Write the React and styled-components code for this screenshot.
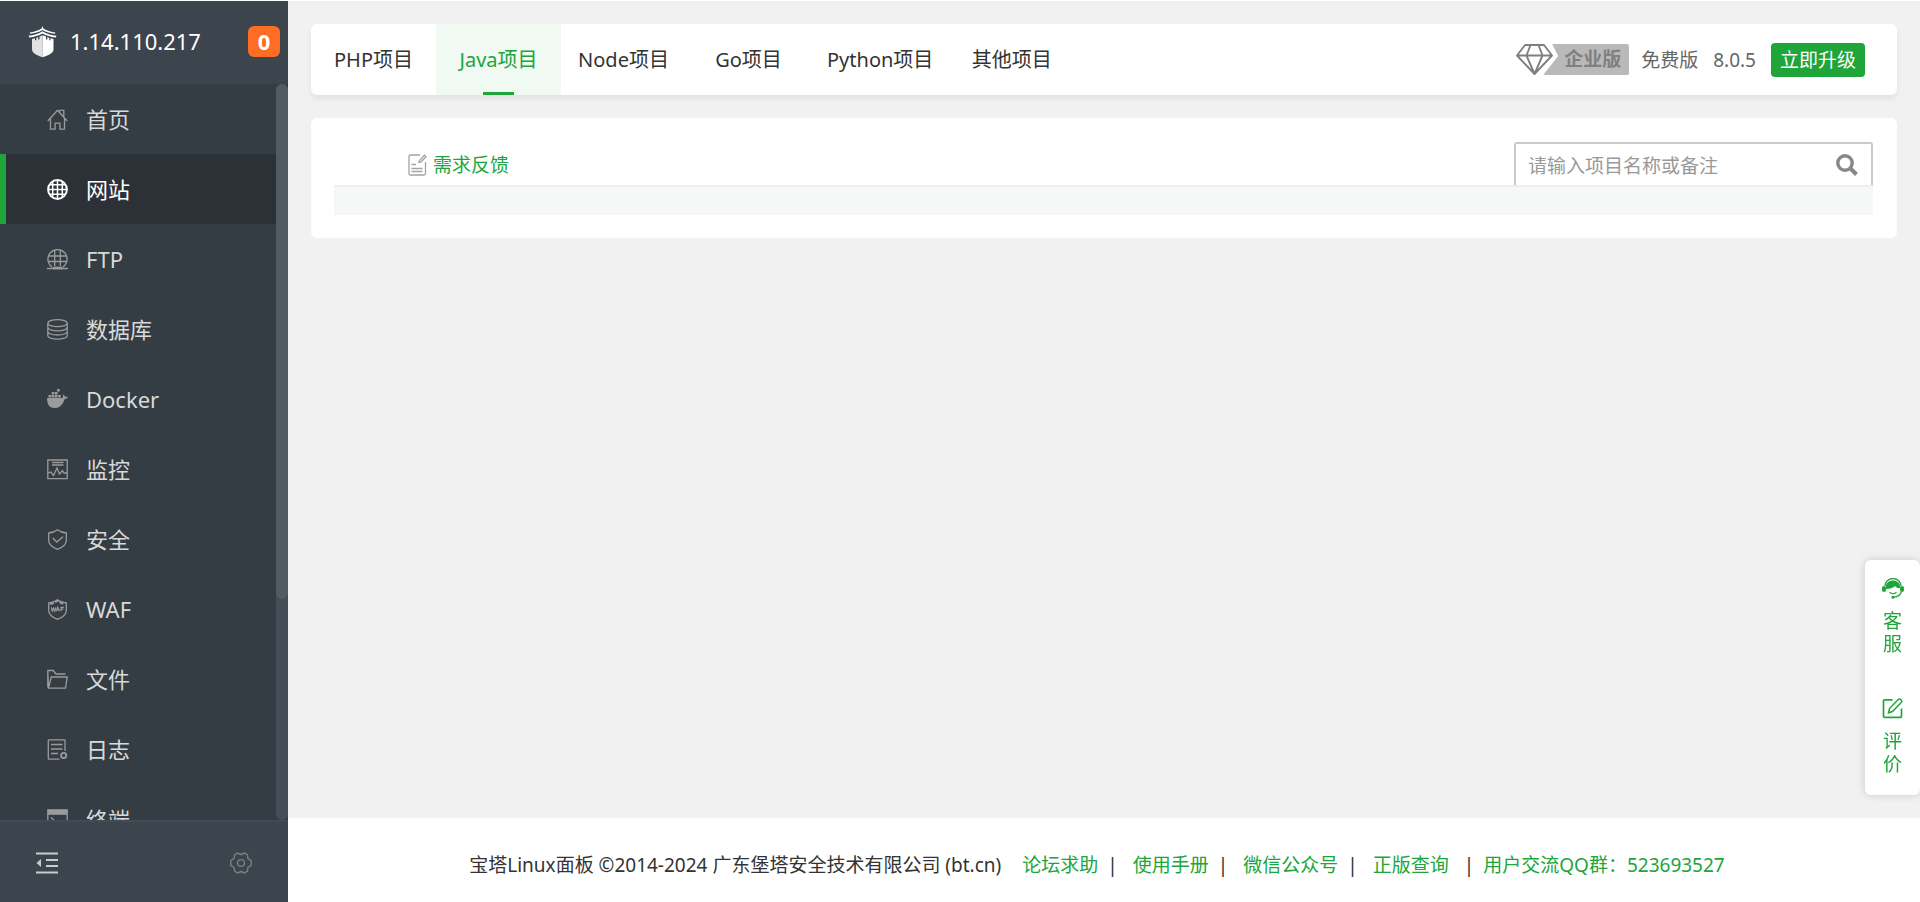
import React from 'react';
import styled, { createGlobalStyle, css } from 'styled-components';

const green = '#20a53a';

const GlobalStyle = createGlobalStyle`
  * {
    box-sizing: border-box;
  }

  body {
    margin: 0;
    background: #f1f1f1;
    color: #333;
    font-family: 'Noto Sans', 'Noto Sans CJK SC', sans-serif;
    font-size: 19px;
    line-height: 28px;
  }

  a {
    text-decoration: none;
  }

  button, input {
    font: inherit;
  }

  svg {
    display: block;
    flex: none;
  }
`;

const Layout = styled.div`
  display: flex;
  height: 100vh;
  border-top: 1px solid #fff;
`;

/* sidebar */

const Sidebar = styled.aside`
  display: flex;
  flex-direction: column;
  flex: none;
  width: 288px;
  background: #353d44;
`;

const SidebarHead = styled.div`
  display: flex;
  align-items: center;
  height: 83px;
  padding: 0 8px 2px 28px;
  background: #3c444d;
  color: #fff;
  font-size: 22px;
`;

const Address = styled.span`
  flex: 1;
  margin-left: 12px;
  padding-bottom: 2px;
`;

const Badge = styled.span`
  width: 32px;
  height: 31px;
  border-radius: 6px;
  background: #ff6c23;
  font-weight: 700;
  line-height: 31px;
  text-align: center;
`;

const MenuWrap = styled.div`
  display: flex;
  flex: 1;
  min-height: 0;
`;

const Menu = styled.ul`
  flex: 1;
  margin: 0;
  padding: 0;
  overflow: hidden;
  list-style: none;
`;

const MenuLink = styled.a`
  display: flex;
  align-items: center;
  gap: 18px;
  height: 70px;
  padding-left: 41px;
  border-left: 6px solid transparent;
  color: #d9d9d9;
  font-size: 22px;

  svg {
    color: #9b9b9b;
  }

  ${({ $active }) => $active && css`
    border-left-color: ${green};
    background: #2c3138;
    color: #fff;

    svg {
      color: #fff;
    }
  `}
`;

const ScrollTrack = styled.div`
  width: 12px;
  border-radius: 6px;
  background: #454d57;
`;

const ScrollThumb = styled.div`
  height: 70%;
  border-radius: 6px;
  background: #525a62;
`;

const SidebarFoot = styled.div`
  display: flex;
  align-items: center;
  justify-content: space-between;
  height: 82px;
  padding: 2px 36px 0;
  border-top: 2px solid #414b56;
  background: #3c444d;
`;

const IconButton = styled.button`
  padding: 0;
  border: 0;
  background: none;
  color: ${({ $color }) => $color};
  cursor: pointer;
`;

/* content */

const Main = styled.main`
  display: flex;
  flex: 1;
  flex-direction: column;
  min-width: 0;
`;

const Content = styled.div`
  display: flex;
  flex: 1;
  flex-direction: column;
  gap: 23px;
  padding: 23px;
`;

const TopBar = styled.header`
  display: flex;
  align-items: center;
  justify-content: space-between;
  height: 71px;
  padding-right: 32px;
  border-radius: 6px;
  background: #fff;
  box-shadow: 0 4px 5px rgba(0, 0, 0, 0.06);
`;

const Tabs = styled.nav`
  display: flex;
  height: 100%;
`;

const Tab = styled.a`
  display: flex;
  align-items: center;
  justify-content: center;
  min-width: 125px;
  padding: 0 16px;
  color: #333;
  font-size: 20px;
  white-space: nowrap;

  ${({ $active }) => $active && css`
    position: relative;
    background: #f0f9f2;
    color: ${green};

    &::after {
      content: '';
      position: absolute;
      bottom: 0;
      left: calc(50% - 16px);
      width: 31px;
      height: 3px;
      background: ${green};
    }
  `}
`;

const Version = styled.div`
  display: flex;
  align-items: center;
  color: #666;
  white-space: nowrap;
`;

const Edition = styled.a`
  display: flex;
  align-items: center;
  margin-right: 12px;
  color: #808080;
  font-weight: 700;
`;

const EditionLabel = styled.span`
  height: 31px;
  margin-left: -10px;
  padding: 0 8px 0 21px;
  border-radius: 2px;
  background: #b9b9b9;
  clip-path: polygon(9px 0, 100% 0, 100% 100%, 0 100%, 15px 12px);
  line-height: 31px;
`;

const VersionNumber = styled.span`
  margin: 0 15px;
`;

const UpgradeButton = styled.button`
  height: 34px;
  padding: 0 9px;
  border: 0;
  border-radius: 4px;
  background: ${green};
  color: #fff;
  line-height: 34px;
  cursor: pointer;
`;

const Panel = styled.section`
  padding: 24px 24px 23px 23px;
  border-radius: 6px;
  background: #fff;
`;

const Toolbar = styled.div`
  display: flex;
  justify-content: space-between;
  height: 43px;
`;

const FeedbackLink = styled.a`
  display: flex;
  align-items: center;
  gap: 6px;
  margin-left: 74px;
  padding-top: 3px;
  color: ${green};
`;

const SearchBox = styled.label`
  display: flex;
  align-items: center;
  width: 359px;
  padding: 0 13px 0 12px;
  border: 2px solid #c9c9c9;
  border-bottom: 0;
  border-radius: 3px 3px 0 0;
  color: #888;
`;

const SearchInput = styled.input`
  flex: 1;
  min-width: 0;
  padding: 2px 0 0;
  border: 0;
  outline: 0;
  background: none;

  &::placeholder {
    color: #999;
    opacity: 1;
  }
`;

const TableHead = styled.div`
  height: 30px;
  border-top: 2px solid #ecf0f0;
  background: #f5f8f7;
`;

const Footer = styled.footer`
  display: flex;
  align-items: center;
  justify-content: center;
  height: 84px;
  padding: 10px 14px 0 0;
  background: #fff;
  white-space: nowrap;
`;

const Copyright = styled.span`
  margin-right: 6px;
`;

const FooterLink = styled.a`
  margin-left: ${({ $near }) => ($near ? '9px' : '15px')};
  color: ${green};
`;

const Divider = styled.span`
  margin-left: ${({ $far }) => ($far ? '15px' : '9px')};
`;

/* floating service box */

const Service = styled.div`
  position: fixed;
  right: 0;
  top: 560px;
  display: flex;
  flex-direction: column;
  justify-content: space-between;
  width: 55px;
  height: 235px;
  padding: 18px 0 19px;
  border-radius: 6px;
  background: #fff;
  box-shadow: 0 0 8px rgba(0, 0, 0, 0.16);
`;

const ServiceLink = styled.a`
  display: flex;
  flex-direction: column;
  align-items: center;
  gap: 11px;
  color: ${green};
`;

const ServiceText = styled.span`
  width: 19px;
  line-height: 23px;
  word-break: break-all;
`;

const Line = ({ size = 21, width = 1.3, children, ...rest }) => (
  <svg
    width={size}
    height={size}
    viewBox={`0 0 ${size} ${size}`}
    fill="none"
    stroke="currentColor"
    strokeWidth={width}
    {...rest}
  >
    {children}
  </svg>
);

const icons = {
  home: (
    <Line>
      <path d="M.8 12 10.5 1.2 20.2 12M3.5 9.8v10.4h4.6v-6h4.8v6h4.6V9.8M12.8 2.6V1.4h4v6" />
    </Line>
  ),
  site: (
    <Line width={2}>
      <circle cx="10.5" cy="10.5" r="9.4" />
      <path strokeWidth="1.5" d="M2 5.7h17M1 10.5h19M2 15.3h17M5.7 2v17M10.5 1v19M15.3 2v17" />
    </Line>
  ),
  ftp: (
    <Line>
      <path d="M5 18A9.6 9.6 0 1 1 16 18M1.500 7h18M1.200 12.500h18.600M7.700 1.500V17M13.300 1.500V17M0 19.500h21" />
      <path strokeWidth="2.6" d="M6 19h9.5" />
    </Line>
  ),
  database: (
    <Line>
      <ellipse cx="10.5" cy="4.2" rx="9.7" ry="3.5" />
      <path d="M.8 4.200v12.500c0 2 4.300 3.500 9.700 3.500s9.700-1.500 9.700-3.500V4.200M.8 8.300c0 2 4.300 3.500 9.700 3.500s9.700-1.500 9.700-3.500M.8 12.500c0 2 4.300 3.500 9.700 3.500s9.700-1.500 9.700-3.500" />
    </Line>
  ),
  docker: (
    <Line fill="currentColor" stroke="none">
      <path d="M0 9h15.500c.8-1 .4-2.500.6-3.500 1.200.6 1.700 1.400 1.900 2.300 1-.3 2-.2 3 .3-.6 1.300-1.800 1.800-3.300 1.800C16 15.500 12.500 19 7.500 19 2.800 19 0 16 0 9zM1.500 6h2.700v2.400H1.500zM4.700 6h2.700v2.400H4.700zM7.900 6h2.700v2.400H7.900zM11.100 6h2.700v2.400h-2.700zM4.700 3.100h2.700v2.400H4.700zM7.900 3.100h2.700v2.400H7.900zM10 0h2.700v2.400H10z" />
    </Line>
  ),
  monitor: (
    <Line>
      <path d="M.8 1h19.400v18.600H.8zM5 3.500h11.500M5 6h11.500M1 14l3-1 2.500 3.500L10 9l2.500 6 3-3.500L17 14h3" />
    </Line>
  ),
  shield: (
    <Line>
      <path d="M10.500.8c2.500 2 5.500 2.900 8.800 3.200v7c0 4.500-4 7.500-8.800 9.300C5.700 18.500 1.700 15.500 1.700 11V4C5 3.700 8 2.800 10.500.8zM5.800 9l4 4L16 7.700" />
    </Line>
  ),
  waf: (
    <Line>
      <path d="M10.500.8c2.500 2.200 5.500 2.700 8.800 3v7.700c0 4.500-4 7-8.800 8.800-4.800-1.800-8.800-4.300-8.800-8.800V3.800c3.300-.3 6.300-.8 8.800-3z" />
      <path strokeWidth="2" d="M3 5l4-1 3.500-2.300L14 4l4 1" strokeDasharray="4 1.5" />
      <path strokeWidth="1.2" d="M4.300 8.300l1 3.700 1.200-3 1.200 3 1-3.700M9 12.300l1.700-4 1.700 4M9.700 11h2M14 12.300v-4h2.800M14 10.200h2.400" />
    </Line>
  ),
  files: (
    <Line>
      <path d="M1.500 19.200.8 1.500h5.500L9 5h9.500M1.500 19.200h17L20.200 8H4.300zM.8 1.500v17" />
    </Line>
  ),
  logs: (
    <Line>
      <path d="M18 12V1.500a.7.7 0 0 0-.7-.7H2a.7.7 0 0 0-.7.7v18c0 .4.3.7.7.7h10.500M4 5.500h11.500M4 10h11.500M4 14.500h7" />
      <circle cx="16.7" cy="16.5" r="2.6" strokeWidth="1.8" />
    </Line>
  ),
  terminal: (
    <Line>
      <path d="M.8 1h19.400v18.600H.8z" />
      <path strokeWidth="5" d="M1 3.300h19" />
      <path d="M4 8.500l4 3.500-4 3.500M10 16h6" />
    </Line>
  ),
};

const menu = [
  { name: '首页', icon: 'home' },
  { name: '网站', icon: 'site', active: true },
  { name: 'FTP', icon: 'ftp' },
  { name: '数据库', icon: 'database' },
  { name: 'Docker', icon: 'docker' },
  { name: '监控', icon: 'monitor' },
  { name: '安全', icon: 'shield' },
  { name: 'WAF', icon: 'waf' },
  { name: '文件', icon: 'files' },
  { name: '日志', icon: 'logs' },
  { name: '终端', icon: 'terminal' },
];

const tabs = ['PHP项目', 'Java项目', 'Node项目', 'Go项目', 'Python项目', '其他项目'];

const Logo = () => (
  <svg width="30" height="32" viewBox="0 0 30 32" fill="#fff">
    <path d="M14.500 0l.9 2.500c3.500 2 7.500 3.500 12 4l-.6 1.300C22.500 7.500 18 6 14.500 4 11 6 6.500 7.500 2.200 7.800L1.600 6.500c4.500-.5 8.500-2 12-4z" />
    <path d="M14.500 5.200c4 2.400 8.500 4 14 4.600l-.8 1.800c-5-.5-9.500-2-13.200-4-3.700 2-8.200 3.500-13.200 4L.5 9.800c5.500-.6 10-2.200 14-4.600z" />
    <path d="M4 13l3-.7v2h1.200v-2.400l2-.8v2.400h1.300v-2.900l3-1.300v21.900C8 29 4 27 4 23z" fill="#e2e2e2" />
    <path d="M25.500 13l-3-.7v2h-1.200v-2.400l-2-.8v2.400H18v-2.900l-3.500-1.300v21.900c7-2.200 11-4.200 11-8.200z" />
  </svg>
);

const App = () => (
  <>
    <GlobalStyle />
    <Layout>
      <Sidebar>
        <SidebarHead>
          <Logo />
          <Address>1.14.110.217</Address>
          <Badge>0</Badge>
        </SidebarHead>
        <MenuWrap>
          <Menu>
            {menu.map((item) => (
              <li key={item.name}>
                <MenuLink href="#" $active={item.active}>
                  {icons[item.icon]}
                  {item.name}
                </MenuLink>
              </li>
            ))}
          </Menu>
          <ScrollTrack>
            <ScrollThumb />
          </ScrollTrack>
        </MenuWrap>
        <SidebarFoot>
          <IconButton type="button" aria-label="收起菜单" $color="#c9cbcd">
            <Line size={22} width={2}>
              <path d="M0 1.500h22M10 8h12M10 14h12M0 20.500h22" />
              <path d="M.5 11 5 7v8z" fill="currentColor" stroke="none" />
            </Line>
          </IconButton>
          <IconButton type="button" aria-label="设置" $color="#7c7f83">
            <Line size={22} width={1.4} strokeLinejoin="round">
              <path d="M7.500 1l3.500 1.500L14.500 1l3 1.800.4 3.700 3.300 2.200v4.600l-3.300 2.200-.4 3.700-3 1.800L11 19.500 7.500 21l-3-1.800-.4-3.700L.8 13.300V8.700l3.300-2.200.4-3.700z" />
              <circle cx="11" cy="11" r="3.4" />
            </Line>
          </IconButton>
        </SidebarFoot>
      </Sidebar>

      <Main>
        <Content>
          <TopBar>
            <Tabs>
              {tabs.map((name) => (
                <Tab key={name} href="#" $active={name === 'Java项目'}>{name}</Tab>
              ))}
            </Tabs>
            <Version>
              <Edition href="#">
                <svg width="37" height="31" viewBox="0 0 37 31" fill="none" stroke="currentColor" strokeWidth="1.9" strokeLinejoin="round">
                  <path d="M9 1h19l8 10.500L18.500 30 1 11.500zM1 11.500h35M14.500 1l-4 10.500 8 18.500 8-18.500-4-10.500" />
                </svg>
                <EditionLabel>企业版</EditionLabel>
              </Edition>
              <span>免费版</span>
              <VersionNumber>8.0.5</VersionNumber>
              <UpgradeButton type="button">立即升级</UpgradeButton>
            </Version>
          </TopBar>

          <Panel>
            <Toolbar>
              <FeedbackLink href="#">
                <svg width="19" height="22" viewBox="0 0 19 22" fill="none" stroke="#a3a3a3" strokeWidth="1.3">
                  <path d="M12 1H2.500A1.500 1.500 0 0 0 1 2.500v17A1.500 1.500 0 0 0 2.500 21h13.500a1.500 1.500 0 0 0 1.500-1.500V8M3.500 10.500H8M3.500 14.500h11M3.500 17.500h11" />
                  <path d="M11 8.500l.5-2L16.500 1.200l1.500 1.500-5.300 5.500z" />
                </svg>
                需求反馈
              </FeedbackLink>
              <SearchBox>
                <SearchInput type="text" aria-label="搜索项目" placeholder="请输入项目名称或备注" />
                <Line size={22} width={3.4}>
                  <circle cx="9" cy="9" r="7.2" />
                  <path d="M14 14l6.500 6.500" strokeWidth="4" />
                </Line>
              </SearchBox>
            </Toolbar>
            <TableHead />
          </Panel>
        </Content>

        <Footer>
          <Copyright>宝塔Linux面板 ©2014-2024 广东堡塔安全技术有限公司 (bt.cn)</Copyright>
          <FooterLink href="#">论坛求助</FooterLink>
          <Divider>|</Divider>
          <FooterLink href="#">使用手册</FooterLink>
          <Divider>|</Divider>
          <FooterLink href="#">微信公众号</FooterLink>
          <Divider>|</Divider>
          <FooterLink href="#">正版查询</FooterLink>
          <Divider $far>|</Divider>
          <FooterLink href="#" $near>用户交流QQ群：523693527</FooterLink>
        </Footer>
      </Main>
    </Layout>

    <Service>
      <ServiceLink href="#">
        <svg width="22" height="21" viewBox="0 0 22 21" fill="currentColor">
          <path d="M3 8a8 7.500 0 0 1 16 0" fill="none" stroke="currentColor" strokeWidth="1.3" />
          <path d="M11 2.500c4 0 7 2.500 7 6v1.500c-2 .5-4-.5-5-2-1.500 2-5 3-9 3V8.500c0-3.500 3-6 7-6z" />
          <rect x="0" y="8" width="4" height="6" rx="2" />
          <rect x="18" y="8" width="4" height="6" rx="2" />
          <path d="M19.500 13.500c-1 3.500-4 5.500-8 5.700M7.500 14c1.500 2.300 5.500 2.300 7 0" fill="none" stroke="currentColor" strokeWidth="1.2" />
          <circle cx="11" cy="19.3" r="1.5" />
        </svg>
        <ServiceText>客服</ServiceText>
      </ServiceLink>
      <ServiceLink href="#">
        <Line size={21} width={1.7}>
          <path d="M10.500 1.800H2.500A1 1 0 0 0 1.500 2.800v15.500a1 1 0 0 0 1 1H18.500a1 1 0 0 0 1-1V10.500" />
          <path d="M6.500 14.800l1-4.300 8.500-8.700a2 2 0 0 1 3 3l-8.500 8.700z" strokeWidth="1.5" />
        </Line>
        <ServiceText>评价</ServiceText>
      </ServiceLink>
    </Service>
  </>
);

export default App;
